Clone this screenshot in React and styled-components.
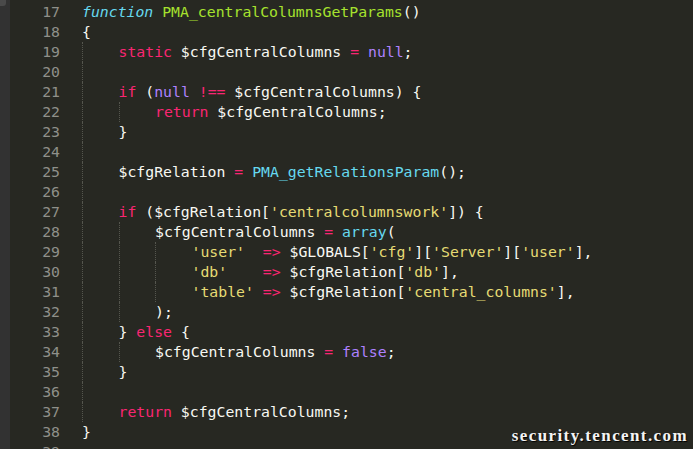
import styled, { createGlobalStyle } from "styled-components";

const GlobalStyle = createGlobalStyle`
  html, body {
    margin: 0;
    padding: 0;
    background: #272822;
    overflow: hidden;
  }
`;

const c = {
  text: "#f8f8f2",
  kw: "#f92672",
  fn: "#a6e22e",
  sup: "#66d9ef",
  num: "#ae81ff",
  str: "#e6db74",
};

// [lineNo, indent, tokens]; token = [text, color, italic]
const lines = [
  [17, 0, [["function", c.sup, true], " ", ["PMA_centralColumnsGetParams", c.fn], "()"]],
  [18, 0, ["{"]],
  [19, 1, [["static", c.kw], " $cfgCentralColumns ", ["=", c.kw], " ", ["null", c.num], ";"]],
  [20, 1, []],
  [21, 1, [["if", c.kw], " (", ["null", c.num], " ", ["!==", c.kw], " $cfgCentralColumns) {"]],
  [22, 2, [["return", c.kw], " $cfgCentralColumns;"]],
  [23, 1, ["}"]],
  [24, 1, []],
  [25, 1, ["$cfgRelation ", ["=", c.kw], " ", ["PMA_getRelationsParam", c.sup], "();"]],
  [26, 1, []],
  [27, 1, [["if", c.kw], " ($cfgRelation[", ["'centralcolumnswork'", c.str], "]) {"]],
  [28, 2, ["$cfgCentralColumns ", ["=", c.kw], " ", ["array", c.sup], "("]],
  [29, 3, [["'user'", c.str], "  ", ["=>", c.kw], " $GLOBALS[", ["'cfg'", c.str], "][", ["'Server'", c.str], "][", ["'user'", c.str], "],"]],
  [30, 3, [["'db'", c.str], "    ", ["=>", c.kw], " $cfgRelation[", ["'db'", c.str], "],"]],
  [31, 3, [["'table'", c.str], " ", ["=>", c.kw], " $cfgRelation[", ["'central_columns'", c.str], "],"]],
  [32, 2, [");"]],
  [33, 1, ["} ", ["else", c.kw], " {"]],
  [34, 2, ["$cfgCentralColumns ", ["=", c.kw], " ", ["false", c.num], ";"]],
  [35, 1, ["}"]],
  [36, 1, []],
  [37, 1, [["return", c.kw], " $cfgCentralColumns;"]],
  [38, 0, ["}"]],
  [39, 0, []],
];

const App = () => {
  return (
    <Window>
      <GlobalStyle />
      <SideBar>
        <Thumb />
      </SideBar>
      <Editor>
        {lines.map(([n, indent, tokens]) => (
          <Row key={n}>
            <LineNo>{n}</LineNo>
            <Code>
              {Array.from({ length: indent }).map((_, i) => (
                <Guide key={i} />
              ))}
              {tokens.map((t, i) =>
                typeof t === "string" ? (
                  <span key={i}>{t}</span>
                ) : (
                  <Token key={i} $color={t[1]} $italic={t[2]}>
                    {t[0]}
                  </Token>
                )
              )}
            </Code>
          </Row>
        ))}
      </Editor>
      <Watermark>security.tencent.com</Watermark>
    </Window>
  );
};

export default App;

const Window = styled.div`
  position: relative;
  display: flex;
  width: 693px;
  height: 449px;
  overflow: hidden;
  background: #272822;
`;

const SideBar = styled.div`
  width: 10px;
  flex-shrink: 0;
  background: #323232;
`;

const Thumb = styled.div`
  width: 6px;
  height: 6px;
  background: #4a4a4a;
  border-radius: 0 0 3px 0;
`;

const Editor = styled.div`
  flex: 1;
  padding-top: 2px;
  font-family: "DejaVu Sans Mono", monospace;
  font-size: 14.8px;
  color: #f8f8f2;
`;

const Row = styled.div`
  display: flex;
  height: 20px;
  line-height: 20px;
  white-space: pre;
`;

const LineNo = styled.div`
  width: 50px;
  padding-right: 22px;
  text-align: right;
  color: #8f908a;
`;

const Code = styled.div`
  display: flex;
  align-items: stretch;
`;

const Guide = styled.span`
  display: inline-block;
  width: 36.5px;
  box-sizing: border-box;
  border-left: 1px dotted #55564e;
`;

const Token = styled.span`
  color: ${(p) => p.$color};
  font-style: ${(p) => (p.$italic ? "italic" : "normal")};
`;

const Watermark = styled.div`
  position: absolute;
  right: 5px;
  bottom: 3px;
  font-family: "Liberation Serif", serif;
  font-weight: 700;
  font-size: 17px;
  letter-spacing: 1.4px;
  color: #f4f4f4;
  text-shadow: 1px 1px 1px #000;
`;
